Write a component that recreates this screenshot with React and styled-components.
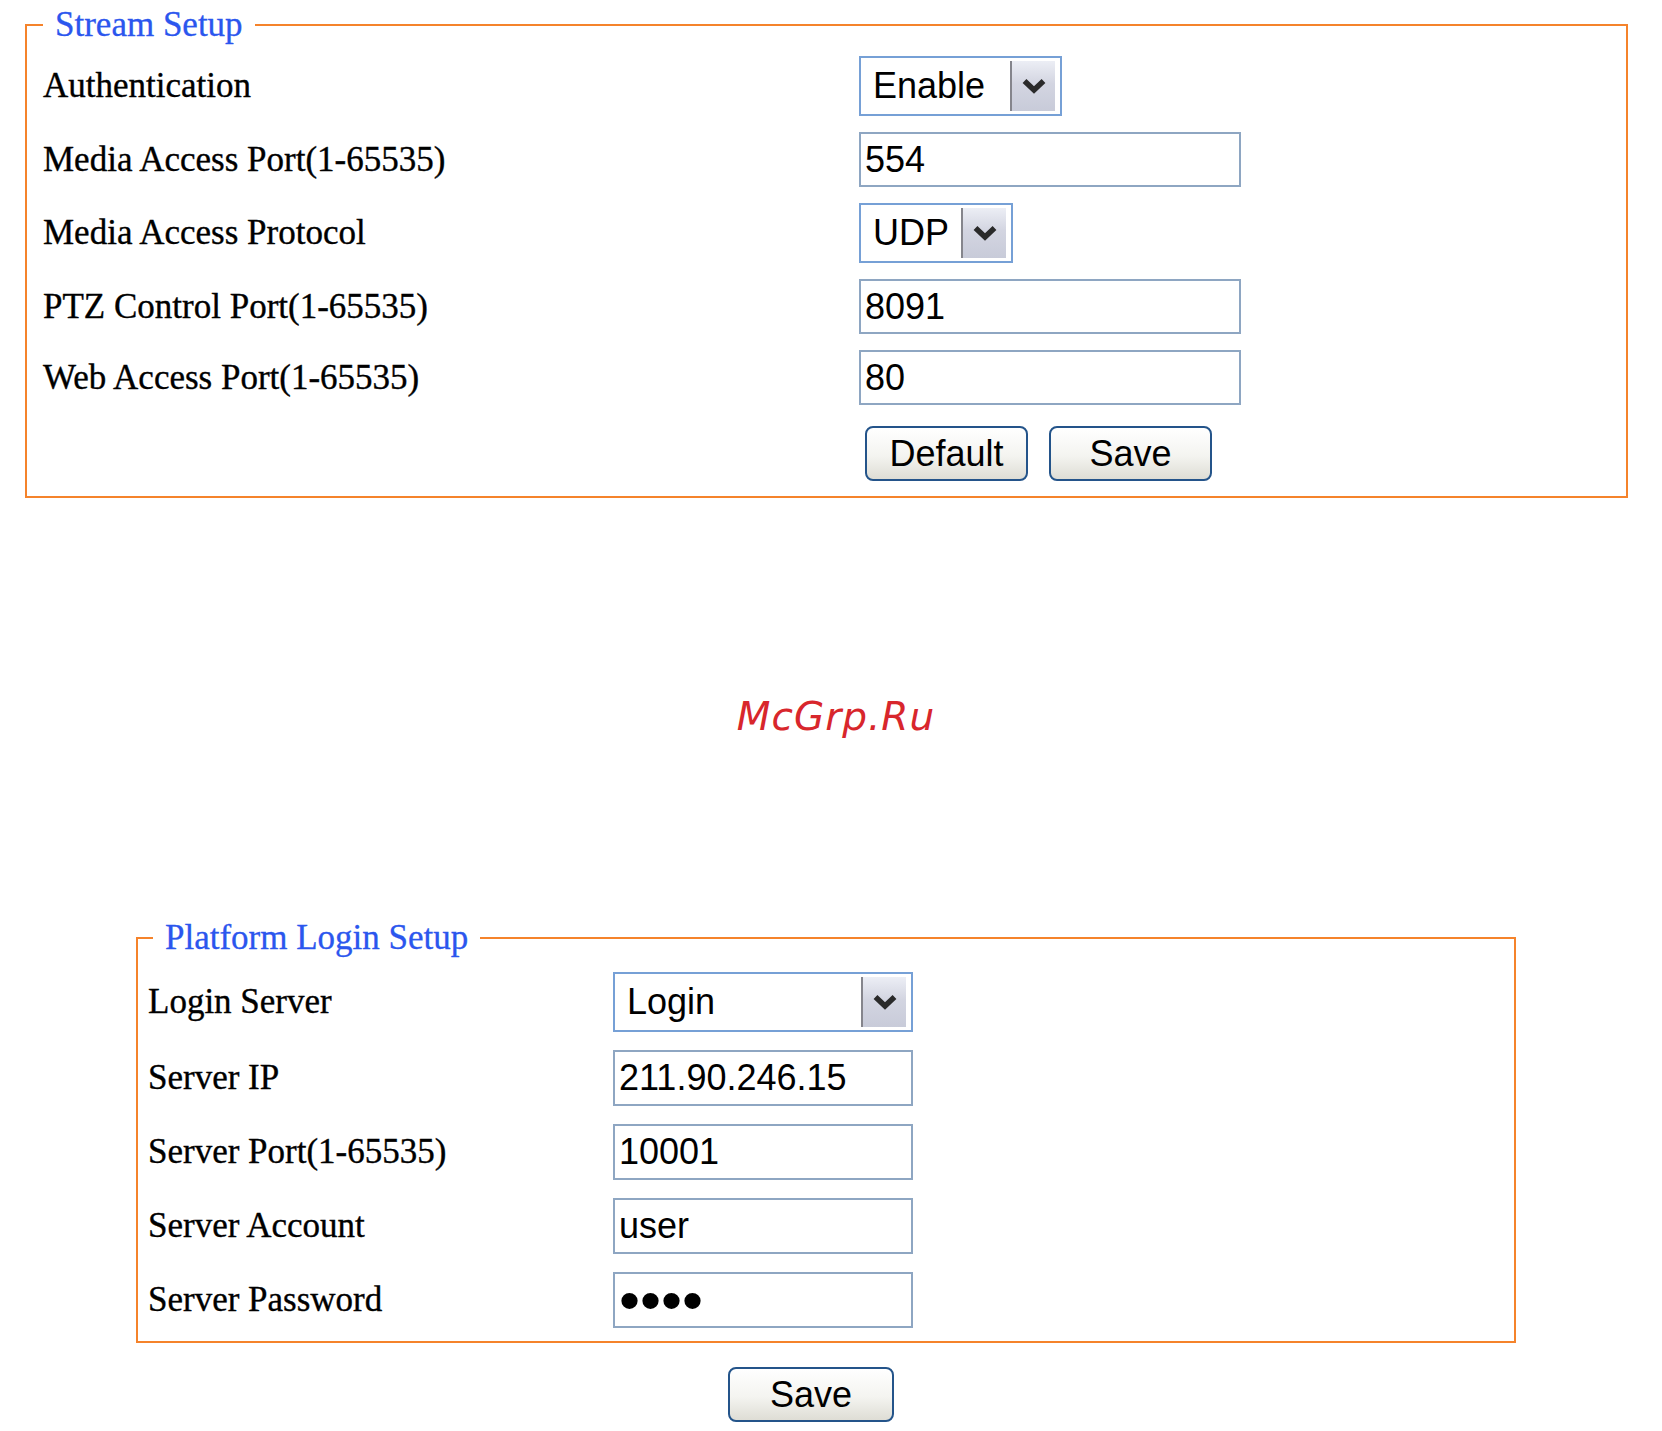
import React from "react";
import styled, { createGlobalStyle } from "styled-components";

const GlobalStyle = createGlobalStyle`
  html, body { margin: 0; padding: 0; background: #ffffff; }
  body { font-family: "Liberation Serif", "Times New Roman", serif; }
`;

const Page = styled.div`
  width: 1662px;
  padding-top: 5px;
  box-sizing: border-box;
`;

const Panel = styled.fieldset`
  box-sizing: border-box;
  width: ${(p) => p.$width}px;
  margin: 0 0 0 ${(p) => p.$left}px;
  border: 2px solid #f5832b;
  padding: ${(p) => p.$pt}px 0 ${(p) => p.$pb}px ${(p) => p.$pl}px;
  min-width: 0;
`;

const Legend = styled.legend`
  font-family: "Liberation Serif", "Times New Roman", serif;
  font-size: 35px;
  line-height: 40px;
  color: #2b56ee;
  -webkit-text-stroke: 0.3px #2b56ee;
  padding: 0 12px;
  margin-left: ${(p) => p.$offset || 0}px;
`;

const FormGrid = styled.div`
  display: grid;
  grid-template-columns: ${(p) => p.$labelWidth}px auto;
  row-gap: ${(p) => p.$gap}px;
  align-items: center;
  justify-items: start;
`;

const Label = styled.div`
  font-family: "Liberation Serif", "Times New Roman", serif;
  font-size: 35px;
  line-height: 40px;
  color: #000;
  -webkit-text-stroke: 0.35px #000;
  white-space: nowrap;
`;

const TextInput = styled.input`
  box-sizing: border-box;
  width: ${(p) => p.$width}px;
  height: ${(p) => p.$height}px;
  margin: 0;
  border: 2px solid #8ea6c2;
  padding: 0 4px;
  font-family: "Liberation Sans", Arial, sans-serif;
  font-size: ${(p) => (p.type === "password" ? 60 : 36)}px;
  color: #000;
  background: #fff;
  outline: none;
`;

const SelectBox = styled.div`
  box-sizing: border-box;
  display: inline-flex;
  align-items: stretch;
  width: ${(p) => p.$width}px;
  height: 60px;
  border: 2px solid #76a0d6;
  background: #fff;
`;

const SelectValue = styled.span`
  flex: 1;
  display: flex;
  align-items: center;
  padding-left: 12px;
  font-family: "Liberation Sans", Arial, sans-serif;
  font-size: 36px;
  color: #000;
`;

const SelectArrow = styled.span`
  width: 43px;
  margin: 3px 5px 3px 0;
  display: flex;
  align-items: center;
  justify-content: center;
  border-left: 2px solid #85858c;
  background: linear-gradient(#eceef5, #d3d5e1 45%, #c8cbd9);
`;

const ButtonRow = styled.div`
  grid-column: 2;
  display: flex;
  gap: 21px;
  margin: 5px 0 0 6px;
`;

const Button = styled.button`
  box-sizing: border-box;
  width: ${(p) => p.$width || 163}px;
  height: 55px;
  margin: 0;
  padding: 0;
  border: 2px solid #24548a;
  border-radius: 8px;
  background: linear-gradient(#ffffff, #f4f4f0 55%, #deddd5);
  font-family: "Liberation Sans", Arial, sans-serif;
  font-size: 36px;
  color: #000;
`;

const Watermark = styled.div`
  margin-top: 196px;
  height: 45px;
  text-align: center;
  padding-left: 10px;
  font-family: "DejaVu Sans", sans-serif;
  font-style: italic;
  font-size: 39px;
  line-height: 45px;
  letter-spacing: 1px;
  color: #d8262c;
`;

const Spacer = styled.div`
  height: ${(p) => p.$h}px;
`;

const FooterRow = styled.div`
  display: flex;
  padding-left: 728px;
  margin-top: 24px;
`;

const Chevron = () => (
  <svg width="26" height="18" viewBox="0 0 26 18">
    <path d="M3.5 4 L13 13 L22.5 4" fill="none" stroke="#2a2a2a" strokeWidth="5.5" />
  </svg>
);

const Select = ({ width, value }) => (
  <SelectBox $width={width}>
    <SelectValue>{value}</SelectValue>
    <SelectArrow>
      <Chevron />
    </SelectArrow>
  </SelectBox>
);

export default function App() {
  return (
    <Page>
      <GlobalStyle />
      <Panel $left={25} $width={1603} $pt={11} $pb={15} $pl={16}>
        <Legend>Stream Setup</Legend>
        <FormGrid $labelWidth={816} $gap={16}>
          <Label>Authentication</Label>
          <Select width={203} value="Enable" />
          <Label>Media Access Port(1-65535)</Label>
          <TextInput $width={382} $height={55} defaultValue="554" />
          <Label>Media Access Protocol</Label>
          <Select width={154} value="UDP" />
          <Label>PTZ Control Port(1-65535)</Label>
          <TextInput $width={382} $height={55} defaultValue="8091" />
          <Label>Web Access Port(1-65535)</Label>
          <TextInput $width={382} $height={55} defaultValue="80" />
          <ButtonRow>
            <Button>Default</Button>
            <Button>Save</Button>
          </ButtonRow>
        </FormGrid>
      </Panel>

      <Watermark>McGrp.Ru</Watermark>
      <Spacer $h={179} />

      <Panel $left={136} $width={1380} $pt={14} $pb={13} $pl={10}>
        <Legend $offset={5}>Platform Login Setup</Legend>
        <FormGrid $labelWidth={465} $gap={18}>
          <Label>Login Server</Label>
          <Select width={300} value="Login" />
          <Label>Server IP</Label>
          <TextInput $width={300} $height={56} defaultValue="211.90.246.15" />
          <Label>Server Port(1-65535)</Label>
          <TextInput $width={300} $height={56} defaultValue="10001" />
          <Label>Server Account</Label>
          <TextInput $width={300} $height={56} defaultValue="user" />
          <Label>Server Password</Label>
          <TextInput $width={300} $height={56} type="password" defaultValue="1234" />
        </FormGrid>
      </Panel>

      <FooterRow>
        <Button $width={166}>Save</Button>
      </FooterRow>
    </Page>
  );
}
